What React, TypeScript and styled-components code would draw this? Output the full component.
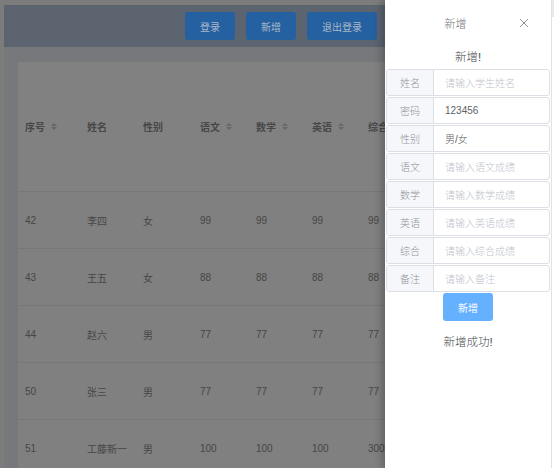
import React from "react";
import styled, { createGlobalStyle } from "styled-components";

const GlobalStyle = createGlobalStyle`
  html, body { margin: 0; padding: 0; background: #7c7c7c; }
  body { font-family: "Liberation Sans", "Noto Sans CJK SC", sans-serif; }
  * { box-sizing: border-box; }
`;

const Root = styled.div`
  display: flex;
  width: 554px;
  height: 468px;
  overflow: hidden;
`;

const Viewport = styled.div`
  position: relative;
  flex: 1;
  overflow: hidden;
`;

const EdgeStrip = styled.div`
  width: 3px;
  background: #fff;
  border-left: 1px solid #e2e2e2;
  background-image: linear-gradient(#e9e9e9 0 17px, #fff 17px);
`;

const Page = styled.div`
  padding: 5px 0 0 4px;
  width: 720px;
  min-height: 100%;
  background: #7c7c7c;
  display: flex;
  flex-direction: column;
`;

const Header = styled.div`
  flex-shrink: 0;
  height: 42px;
  background: #5c6470;
  display: flex;
  align-items: center;
  gap: 11px;
  padding-left: 181px;
`;

const HeaderButton = styled.div`
  height: 28px;
  padding: 0 15px;
  display: flex;
  align-items: center;
  background: #2560a0;
  color: #a9b8ca;
  border-radius: 3px;
  font-size: 10px;
`;

const Content = styled.div`
  flex: 1;
  background: #76787b;
  padding: 15px 0 0 14px;
`;

const Table = styled.div`
  background: #808080;
  display: flex;
  flex-direction: column;
`;

const Row = styled.div<{ $head?: boolean }>`
  display: grid;
  grid-template-columns: 62px 56px 57px 56px 56px 56px 80px 80px;
  height: ${(p) => (p.$head ? "130px" : "57px")};
  flex-shrink: 0;
  border-bottom: 1px solid #777777;
  align-items: center;
  background: ${(p) => (p.$head ? "#818181" : "#808080")};
`;

const Cell = styled.div<{ $head?: boolean }>`
  padding-left: 7px;
  font-size: 10px;
  color: ${(p) => (p.$head ? "#474747" : "#464646")};
  font-weight: ${(p) => (p.$head ? "bold" : "normal")};
  white-space: nowrap;
  display: flex;
  align-items: center;
`;

const SortIcon = styled.span`
  display: inline-flex;
  flex-direction: column;
  gap: 1px;
  margin-left: 6px;
  &::before, &::after {
    content: "";
    width: 0;
    height: 0;
    border-left: 3px solid transparent;
    border-right: 3px solid transparent;
  }
  &::before { border-bottom: 3px solid #666666; }
  &::after { border-top: 3px solid #666666; }
`;

const Mask = styled.div`
  position: absolute;
  inset: 0;
  pointer-events: none;
`;

const Drawer = styled.div`
  position: absolute;
  top: 0;
  right: 0;
  bottom: 0;
  width: 166px;
  background: #fff;
  box-shadow: -3px 0 8px rgba(0, 0, 0, 0.25);
  display: flex;
  flex-direction: column;
  align-items: stretch;
  padding: 0 1px;
`;

const DrawerHeader = styled.div`
  display: flex;
  align-items: center;
  height: 46px;
  padding: 0 21px 0 20px;
`;

const DrawerTitle = styled.div`
  flex: 1;
  text-align: center;
  font-size: 11px;
  font-weight: 300;
  color: #72767b;
  padding-right: 14px;
`;

const CloseButton = styled.div`
  width: 10px;
  height: 10px;
  display: flex;
`;

const FormTitle = styled.div`
  text-align: center;
  font-size: 11.5px;
  font-weight: 300;
  color: #45474a;
  margin: 3px 0 4px;
  line-height: 16px;
`;

const Form = styled.div`
  display: flex;
  flex-direction: column;
  gap: 1px;
`;

const Group = styled.div`
  display: flex;
  height: 27px;
  border: 1px solid #dcdfe6;
  border-radius: 3px;
  overflow: hidden;
`;

const GroupLabel = styled.div`
  width: 47px;
  background: #f5f7fa;
  border-right: 1px solid #dcdfe6;
  display: flex;
  align-items: center;
  justify-content: center;
  font-size: 10px;
  font-weight: 300;
  color: #909399;
`;

const GroupInput = styled.div<{ $placeholder?: boolean }>`
  flex: 1;
  display: flex;
  align-items: center;
  padding-left: 11px;
  font-size: 10px;
  font-weight: 300;
  color: ${(p) => (p.$placeholder ? "#c0c4cc" : "#606266")};
  white-space: nowrap;
`;

const SubmitButton = styled.div`
  align-self: center;
  margin-top: 1px;
  width: 50px;
  height: 28px;
  border-radius: 3px;
  background: #66b1ff;
  color: #fff;
  font-size: 10px;
  display: flex;
  align-items: center;
  justify-content: center;
`;

const Message = styled.div`
  text-align: center;
  font-size: 11.5px;
  font-weight: 300;
  color: #45474a;
  margin-top: 12px;
`;

const heads: { label: string; sort?: boolean }[] = [
  { label: "序号", sort: true },
  { label: "姓名" },
  { label: "性别" },
  { label: "语文", sort: true },
  { label: "数学", sort: true },
  { label: "英语", sort: true },
  { label: "综合", sort: true },
  { label: "备注" },
];

const rows = [
  ["42", "李四", "女", "99", "99", "99", "99", ""],
  ["43", "王五", "女", "88", "88", "88", "88", ""],
  ["44", "赵六", "男", "77", "77", "77", "77", ""],
  ["50", "张三", "男", "77", "77", "77", "77", ""],
  ["51", "工藤新一", "男", "100", "100", "100", "300", ""],
];

const fields: { label: string; value?: string; placeholder?: string }[] = [
  { label: "姓名", placeholder: "请输入学生姓名" },
  { label: "密码", value: "123456" },
  { label: "性别", value: "男/女" },
  { label: "语文", placeholder: "请输入语文成绩" },
  { label: "数学", placeholder: "请输入数学成绩" },
  { label: "英语", placeholder: "请输入英语成绩" },
  { label: "综合", placeholder: "请输入综合成绩" },
  { label: "备注", placeholder: "请输入备注" },
];

export default function App() {
  return (
    <Root>
      <GlobalStyle />
      <Viewport>
        <Page>
          <Header>
            <HeaderButton>登录</HeaderButton>
            <HeaderButton>新增</HeaderButton>
            <HeaderButton>退出登录</HeaderButton>
          </Header>
          <Content>
            <Table>
              <Row $head>
                {heads.map((h) => (
                  <Cell $head key={h.label}>
                    {h.label}
                    {h.sort && <SortIcon />}
                  </Cell>
                ))}
              </Row>
              {rows.map((r) => (
                <Row key={r[0]}>
                  {r.map((c, i) => (
                    <Cell key={i}>{c}</Cell>
                  ))}
                </Row>
              ))}
            </Table>
          </Content>
        </Page>
        <Mask />
        <Drawer>
          <DrawerHeader>
            <DrawerTitle>新增</DrawerTitle>
            <CloseButton>
              <svg width="10" height="10" viewBox="0 0 10 10">
                <path d="M1 1L9 9M9 1L1 9" stroke="#909399" strokeWidth="1" fill="none" />
              </svg>
            </CloseButton>
          </DrawerHeader>
          <FormTitle>新增!</FormTitle>
          <Form>
            {fields.map((f) => (
              <Group key={f.label}>
                <GroupLabel>{f.label}</GroupLabel>
                <GroupInput $placeholder={!f.value}>{f.value ?? f.placeholder}</GroupInput>
              </Group>
            ))}
          </Form>
          <SubmitButton>新增</SubmitButton>
          <Message>新增成功!</Message>
        </Drawer>
      </Viewport>
      <EdgeStrip />
    </Root>
  );
}
